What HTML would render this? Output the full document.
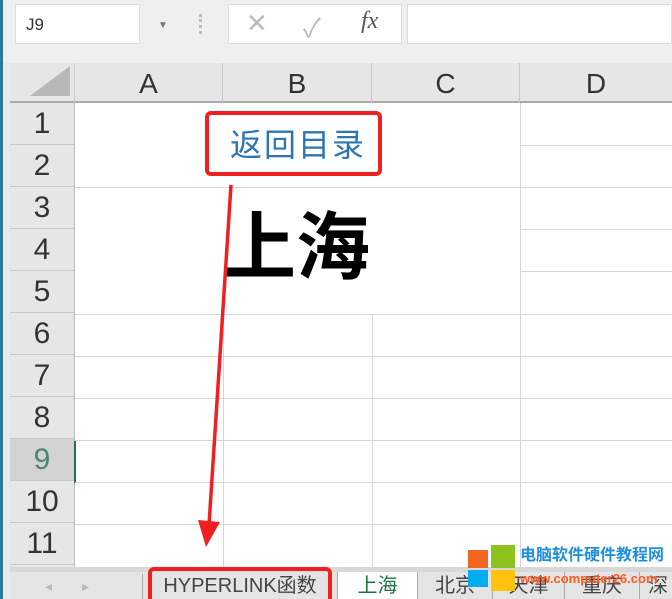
<!DOCTYPE html>
<html><head><meta charset="utf-8"><style>
*{margin:0;padding:0;box-sizing:border-box}
html,body{width:672px;height:599px;overflow:hidden}
body{background:#e9e9e9;position:relative;font-family:"Liberation Sans","Noto Sans CJK SC",sans-serif}
.a{position:absolute;white-space:nowrap}
.hl{position:absolute;height:1px;background:#d6d6d6}
.vl{position:absolute;width:1px;background:#d6d6d6}
.rh{position:absolute;left:10px;width:64px;height:42px;text-align:center;font-size:30px;line-height:42px;color:#333;border-bottom:1px solid #c8c8c8;background:#e6e6e6}
.ch{position:absolute;top:63px;height:40px;text-align:center;font-size:28px;line-height:42px;color:#333;border-right:1px solid #c8c8c8}
.tab{position:absolute;top:572px;height:27px;font-size:20px;line-height:28px;text-align:center;color:#444;border-right:1px solid #aaa;white-space:nowrap}
</style></head><body>
<div class="a" style="left:0;top:0;width:3px;height:599px;background:#2a7a9a"></div>
<div class="a" style="left:3px;top:0;width:669px;height:63px;background:#efefef"></div>
<div class="a" style="left:15px;top:4px;width:125px;height:40px;background:#fff;border:1px solid #ddd;font-size:17px;line-height:40px;padding-left:10px;color:#333">J9</div>
<div class="a" style="left:158px;top:20px;font-size:10px;color:#777">▼</div>
<div class="a" style="left:199px;top:14px;width:3px;height:20px;border-left:3px dotted #bbb"></div>
<div class="a" style="left:228px;top:4px;width:174px;height:40px;background:#fff;border:1px solid #ddd"></div>
<div class="a" style="left:246px;top:8px;font-size:26px;color:#bbb">✕</div>
<div class="a" style="left:303px;top:8px;font-size:26px;color:#bbb">✓</div>
<div class="a" style="left:361px;top:8px;font-size:24px;font-style:italic;font-family:'Liberation Serif',serif;color:#555">fx</div>
<div class="a" style="left:407px;top:4px;width:265px;height:40px;background:#fff;border:1px solid #ddd"></div>
<div class="a" style="left:10px;top:63px;width:662px;height:40px;background:#e6e6e6;border-bottom:2px solid #aaa"></div>
<div class="a" style="left:10px;top:63px;width:65px;height:40px;border-right:1px solid #c8c8c8"></div>
<div class="a" style="left:30px;top:66px;width:0;height:0;border-left:40px solid transparent;border-bottom:30px solid #b8b8b8"></div>
<div class="ch" style="left:75px;width:148px">A</div>
<div class="ch" style="left:223px;width:149px">B</div>
<div class="ch" style="left:372px;width:148px">C</div>
<div class="ch" style="left:520px;width:152px;border:none">D</div>
<div class="a" style="left:74px;top:103px;width:598px;height:464px;background:#fff"></div>
<div class="rh" style="top:103px">1</div><div class="rh" style="top:145px">2</div><div class="rh" style="top:187px">3</div><div class="rh" style="top:229px">4</div><div class="rh" style="top:271px">5</div><div class="rh" style="top:313px">6</div><div class="rh" style="top:355px">7</div><div class="rh" style="top:397px">8</div><div class="rh" style="top:439px;background:#d2d2d2;color:#4a8a6a">9</div><div class="rh" style="top:481px">10</div><div class="rh" style="top:523px">11</div>
<div class="a" style="left:74px;top:103px;width:1px;height:464px;background:#bbb"></div>
<div class="a" style="left:74px;top:441px;width:2px;height:42px;background:#217346"></div>
<div class="hl" style="left:520px;top:145px;width:152px"></div>
<div class="hl" style="left:75px;top:187px;width:597px"></div>
<div class="hl" style="left:520px;top:229px;width:152px"></div>
<div class="hl" style="left:520px;top:271px;width:152px"></div>
<div class="hl" style="left:75px;top:314px;width:597px"></div>
<div class="hl" style="left:75px;top:356px;width:597px"></div>
<div class="hl" style="left:75px;top:398px;width:597px"></div>
<div class="hl" style="left:75px;top:440px;width:597px"></div>
<div class="hl" style="left:75px;top:482px;width:597px"></div>
<div class="hl" style="left:75px;top:524px;width:597px"></div>
<div class="vl" style="left:520px;top:103px;height:464px"></div>
<div class="vl" style="left:223px;top:314px;height:253px"></div>
<div class="vl" style="left:372px;top:314px;height:253px"></div>
<div class="a" style="left:10px;top:567px;width:662px;height:5px;background:#d8d8d8"></div>
<div class="a" style="left:205px;top:111px;width:177px;height:65px;border:4px solid #f02020;border-radius:6px"></div>
<div class="a" style="left:230px;top:125px;font-size:32px;line-height:40px;color:#2e75b6;letter-spacing:2px">返回目录</div>
<div class="a" style="left:222px;top:203px;font-size:74px;line-height:90px;font-weight:bold;color:#000">上海</div>
<div class="a" style="left:10px;top:572px;width:662px;height:27px;background:#e4e4e4"></div>
<div class="a" style="left:45px;top:578px;font-size:14px;color:#bbb">◂</div>
<div class="a" style="left:82px;top:578px;font-size:14px;color:#bbb">▸</div>
<div class="vl" style="left:142px;top:574px;height:25px;background:#aaa"></div>
<div class="tab" style="left:143px;width:195px">HYPERLINK函数</div>
<div class="tab" style="left:338px;width:80px;background:#fff;color:#217346">上海</div>
<div class="tab" style="left:418px;width:75px">北京</div>
<div class="tab" style="left:493px;width:72px">天津</div>
<div class="tab" style="left:565px;width:75px">重庆</div>
<div class="tab" style="left:640px;width:40px;text-align:left;padding-left:8px;border:none">深</div>
<div class="a" style="left:148px;top:567px;width:184px;height:40px;border:4px solid #f02020;border-radius:6px"></div>
<svg class="a" style="left:0;top:0" width="672" height="599"><line x1="231" y1="185" x2="209" y2="525" stroke="#f02020" stroke-width="3.5"/><polygon points="198,520 220,522 206,547" fill="#f02020"/></svg>
<div class="a" style="left:468px;top:550px;width:20px;height:18px;background:#f26522"></div>
<div class="a" style="left:491px;top:545px;width:24px;height:23px;background:#8dc21f"></div>
<div class="a" style="left:468px;top:570px;width:20px;height:17px;background:#00aeef"></div>
<div class="a" style="left:491px;top:570px;width:24px;height:21px;background:#ffc20e"></div>
<div class="a" style="left:520px;top:545px;font-size:16px;font-weight:bold;color:#1e8fe0;line-height:22px">电脑软件硬件教程网</div>
<div class="a" style="left:520px;top:571px;font-size:13px;font-weight:bold;color:#ff5a1f;line-height:16px">www.computer26.com</div>
</body></html>
